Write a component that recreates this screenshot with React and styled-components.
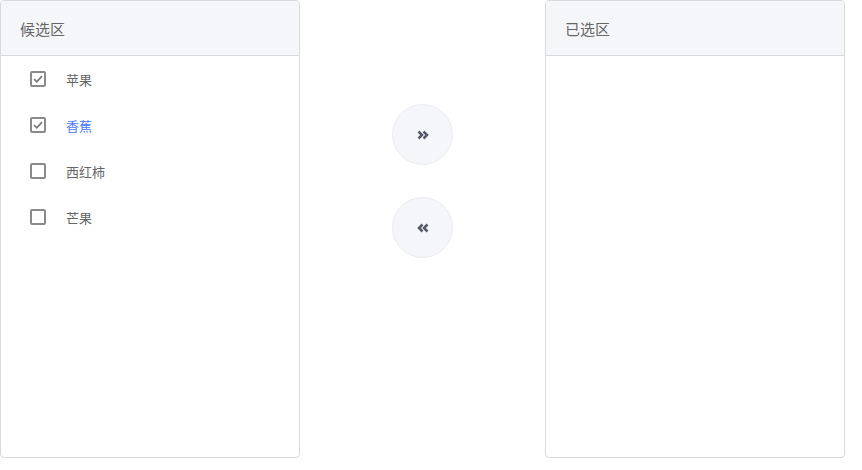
import React, { useState } from 'react';
import styled, { createGlobalStyle } from 'styled-components';

const GlobalStyle = createGlobalStyle`
  body {
    margin: 0;
    padding: 0;
    background: #ffffff;
    font-family: 'Noto Sans CJK SC', 'Noto Sans', sans-serif;
  }
`;

const Page = styled.div`
  display: flex;
  width: 845px;
  height: 458px;
`;

const Panel = styled.div`
  width: 300px;
  box-sizing: border-box;
  border: 1px solid #d9d9dc;
  border-radius: 4px;
  display: flex;
  flex-direction: column;
  overflow: hidden;
`;

const PanelHeader = styled.div`
  height: 55px;
  flex-shrink: 0;
  box-sizing: border-box;
  padding-left: 19px;
  display: flex;
  align-items: center;
  background: #f5f6fa;
  border-bottom: 1px solid #d9d9dc;
  color: #666;
  font-size: 15px;
`;

const List = styled.div`
  display: flex;
  flex-direction: column;
`;

const Item = styled.label`
  display: flex;
  align-items: center;
  height: 46px;
  padding-left: 29px;
  font-size: 13px;
  color: ${({ active }) => (active ? '#4a78ff' : '#666')};
  cursor: pointer;
`;

const Box = styled.span`
  width: 16px;
  height: 16px;
  box-sizing: border-box;
  border: 2px solid #8a8a8a;
  border-radius: 2px;
  margin-right: 20px;
  display: flex;
  align-items: center;
  justify-content: center;
`;

const Middle = styled.div`
  width: 245px;
  display: flex;
  flex-direction: column;
  align-items: center;
  padding-top: 104px;
  gap: 32px;
`;

const RoundButton = styled.button`
  width: 61px;
  height: 61px;
  border-radius: 50%;
  border: 1px solid #ececf0;
  background: #f5f6fa;
  display: flex;
  align-items: center;
  justify-content: center;
  padding: 0;
  cursor: pointer;
`;

const Check = () => (
  <svg width="12" height="12" viewBox="0 0 12 12">
    <path d="M2 6.2 L4.8 8.8 L10 3.2" fill="none" stroke="#7a7a7a" strokeWidth="1.8" />
  </svg>
);

const Chevrons = ({ left }) => (
  <svg width="12" height="10" viewBox="0 0 12 10" style={{ transform: left ? 'scaleX(-1)' : 'none' }}>
    <path d="M1.5 1.5 L5 5 L1.5 8.5 M6.5 1.5 L10 5 L6.5 8.5" fill="none" stroke="#555a66" strokeWidth="2.5" />
  </svg>
);

const fruits = [
  { name: '苹果', checked: true },
  { name: '香蕉', checked: true, active: true },
  { name: '西红柿', checked: false },
  { name: '芒果', checked: false },
];

const App = () => {
  const [items] = useState(fruits);

  return (
    <>
      <GlobalStyle />
      <Page>
        <Panel>
          <PanelHeader>候选区</PanelHeader>
          <List>
            {items.map((f) => (
              <Item key={f.name} active={f.active}>
                <Box>{f.checked && <Check />}</Box>
                {f.name}
              </Item>
            ))}
          </List>
        </Panel>
        <Middle>
          <RoundButton><Chevrons /></RoundButton>
          <RoundButton><Chevrons left /></RoundButton>
        </Middle>
        <Panel>
          <PanelHeader>已选区</PanelHeader>
        </Panel>
      </Page>
    </>
  );
};

export default App;
